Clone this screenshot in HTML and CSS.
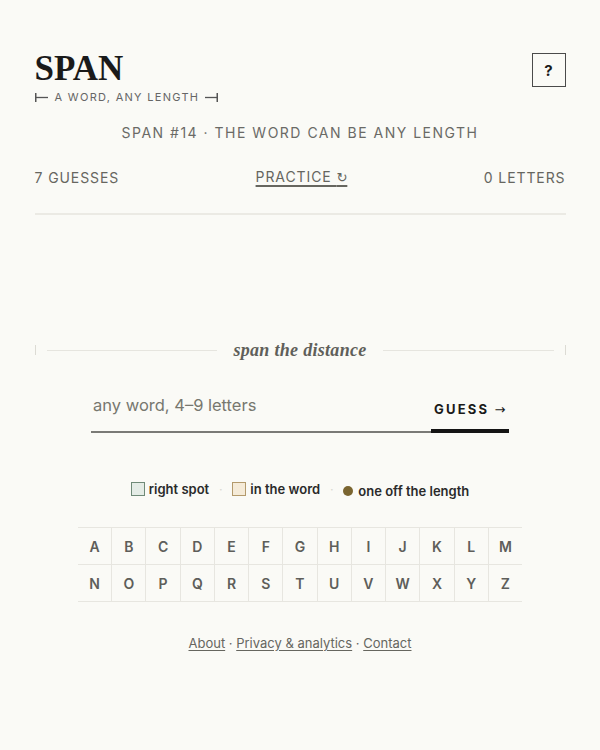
FILE: index.html
```html
<!DOCTYPE html>
<html lang="en">
<head>
<meta charset="utf-8">
<title>Span</title>
<link rel="stylesheet" href="styles.css">
</head>
<body>
<main class="page">
  <header class="top">
    <div class="brand">
      <h1 class="logo">SPAN</h1>
      <div class="tagline">
        <svg class="cap" width="13" height="9" viewBox="0 0 13 9"><line x1="0.75" y1="0" x2="0.75" y2="9" stroke="#555" stroke-width="1.5"/><line x1="0" y1="4.5" x2="13" y2="4.5" stroke="#555" stroke-width="1.3"/></svg>
        <span>A WORD, ANY LENGTH</span>
        <svg class="cap" width="13" height="9" viewBox="0 0 13 9"><line x1="12.25" y1="0" x2="12.25" y2="9" stroke="#555" stroke-width="1.5"/><line x1="0" y1="4.5" x2="13" y2="4.5" stroke="#555" stroke-width="1.3"/></svg>
      </div>
    </div>
    <button class="help">?</button>
  </header>

  <p class="puzzle">SPAN #14 · THE WORD CAN BE ANY LENGTH</p>

  <div class="stats">
    <span>7 GUESSES</span>
    <a class="practice" href="#">PRACTICE <span class="redo">↻</span></a>
    <span>0 LETTERS</span>
  </div>

  <div class="board"></div>

  <div class="ruler">
    <span class="tick"></span>
    <span class="rule"></span>
    <span class="ruler-text">span the distance</span>
    <span class="rule"></span>
    <span class="tick"></span>
  </div>

  <form class="entry">
    <input class="word" type="text" placeholder="any word, 4–9 letters">
    <button class="guess" type="button">GUESS <span class="arrow">→</span></button>
  </form>

  <div class="legend">
    <span class="item"><span class="box box-spot"></span>right spot</span>
    <span class="sep">·</span>
    <span class="item"><span class="box box-word"></span>in the word</span>
    <span class="sep">·</span>
    <span class="item item-len"><span class="dot"></span>one off the length</span>
  </div>

  <div class="keys">
    <span class="key">A</span><span class="key">B</span><span class="key">C</span><span class="key">D</span><span class="key">E</span><span class="key">F</span><span class="key">G</span><span class="key">H</span><span class="key">I</span><span class="key">J</span><span class="key">K</span><span class="key">L</span><span class="key">M</span>
    <span class="key">N</span><span class="key">O</span><span class="key">P</span><span class="key">Q</span><span class="key">R</span><span class="key">S</span><span class="key">T</span><span class="key">U</span><span class="key">V</span><span class="key">W</span><span class="key">X</span><span class="key">Y</span><span class="key">Z</span>
  </div>

  <footer class="foot">
    <a href="#">About</a> · <a href="#">Privacy &amp; analytics</a> · <a href="#">Contact</a>
  </footer>
</main>
</body>
</html>
```

FILE: styles.css
```css
* { box-sizing: border-box; }
html, body { margin: 0; padding: 0; }
body {
  background: #fafaf6;
  color: #1b1b1b;
  font-family: "Inter", "Liberation Sans", sans-serif;
}
.page {
  width: 531px;
  margin: 0 auto;
  padding-top: 50px;
}
.top {
  display: flex;
  justify-content: space-between;
  align-items: flex-start;
}
.logo {
  margin: 0;
  font-family: "Liberation Serif", serif;
  font-weight: 700;
  font-size: 35px;
  line-height: 38px;
  color: #1a1a1a;
}
.tagline {
  display: flex;
  align-items: center;
  gap: 7px;
  margin-top: 2px;
  font-size: 11px;
  letter-spacing: 1.3px;
  color: #666;
}
.tagline span { margin-right: -1.3px; }
.cap { display: block; }
.help {
  margin-top: 3px;
  width: 34px;
  height: 34px;
  border: 1.5px solid #4a4a4a;
  background: transparent;
  font-family: "Inter", sans-serif;
  font-weight: 700;
  font-size: 15px;
  color: #1a1a1a;
  padding: 0;
}
.puzzle {
  margin: 19px 0 0;
  text-align: center;
  font-size: 14px;
  line-height: 20px;
  letter-spacing: 1.5px;
  color: #6a6a66;
}
.stats {
  display: flex;
  justify-content: space-between;
  align-items: center;
  margin-top: 25px;
  padding-bottom: 26px;
  border-bottom: 2px solid #ebeae4;
  font-size: 14px;
  line-height: 18px;
  letter-spacing: 0.9px;
  color: #66665f;
}
.practice {
  color: #66665f;
  text-decoration: underline;
  text-decoration-thickness: 1.5px;
  text-underline-offset: 3px;
}
.redo {
  font-family: "DejaVu Sans", sans-serif;
  font-size: 13px;
  letter-spacing: 0;
}
.board { height: 123px; }
.ruler {
  display: flex;
  align-items: center;
  height: 24px;
}
.tick {
  width: 1px;
  height: 10px;
  background: #dcdbd4;
}
.rule {
  flex: 1;
  height: 1px;
  background: #e6e5df;
  margin: 0 11px;
}
.ruler-text {
  font-family: "Liberation Serif", serif;
  font-style: italic;
  font-weight: 700;
  font-size: 18px;
  letter-spacing: 0.3px;
  color: #5f5f5a;
  padding: 0 5px;
}
.entry {
  display: flex;
  align-items: flex-end;
  width: 418px;
  margin: 29px auto 0;
}
.word {
  flex: 1;
  min-width: 0;
  border: none;
  border-bottom: 2px solid #7a7a76;
  background: transparent;
  font-family: "Inter", sans-serif;
  font-size: 16.5px;
  height: 42px;
  padding: 0 2px 12px;
  color: #333;
  outline: none;
}
.word::placeholder { color: #77776f; }
.guess {
  width: 78px;
  height: 42px;
  border: none;
  border-bottom: 4px solid #141414;
  background: transparent;
  font-family: "Inter", sans-serif;
  font-weight: 700;
  font-size: 13px;
  letter-spacing: 2.2px;
  color: #1a1a1a;
  padding: 0 0 2px 3px;
  text-align: left;
}
.arrow {
  font-family: "DejaVu Sans", sans-serif;
  font-weight: 400;
  letter-spacing: 0;
}
.legend {
  display: flex;
  justify-content: center;
  align-items: center;
  gap: 10px;
  margin-top: 47px;
  font-size: 13px;
  font-weight: 600;
  color: #2a2a2a;
  line-height: 18px;
}
.item { display: flex; align-items: center; gap: 4px; }
.item-len { gap: 5px; position: relative; top: 2px; }
.sep { color: #d8d7d0; font-size: 10px; }
.box {
  width: 14px;
  height: 14px;
  border: 1.5px solid;
}
.box-spot { background: #e4ece6; border-color: #6f8a78; }
.box-word { background: #f5ebd8; border-color: #b39a6c; }
.dot {
  width: 10px;
  height: 10px;
  border-radius: 50%;
  background: #7a6530;
}
.keys {
  display: grid;
  grid-template-columns: repeat(13, 1fr);
  gap: 1px;
  padding: 1px 0;
  background: #e7e6e0;
  width: 444px;
  margin: 29px auto 0;
}
.key {
  background: #fafaf6;
  height: 36px;
  display: flex;
  align-items: center;
  justify-content: center;
  font-size: 14px;
  font-weight: 600;
  color: #5e5e5a;
}
.foot {
  margin-top: 33px;
  text-align: center;
  font-size: 13px;
  color: #66665f;
}
.foot a {
  color: #66665f;
  text-decoration: underline;
  text-underline-offset: 2px;
}
```
